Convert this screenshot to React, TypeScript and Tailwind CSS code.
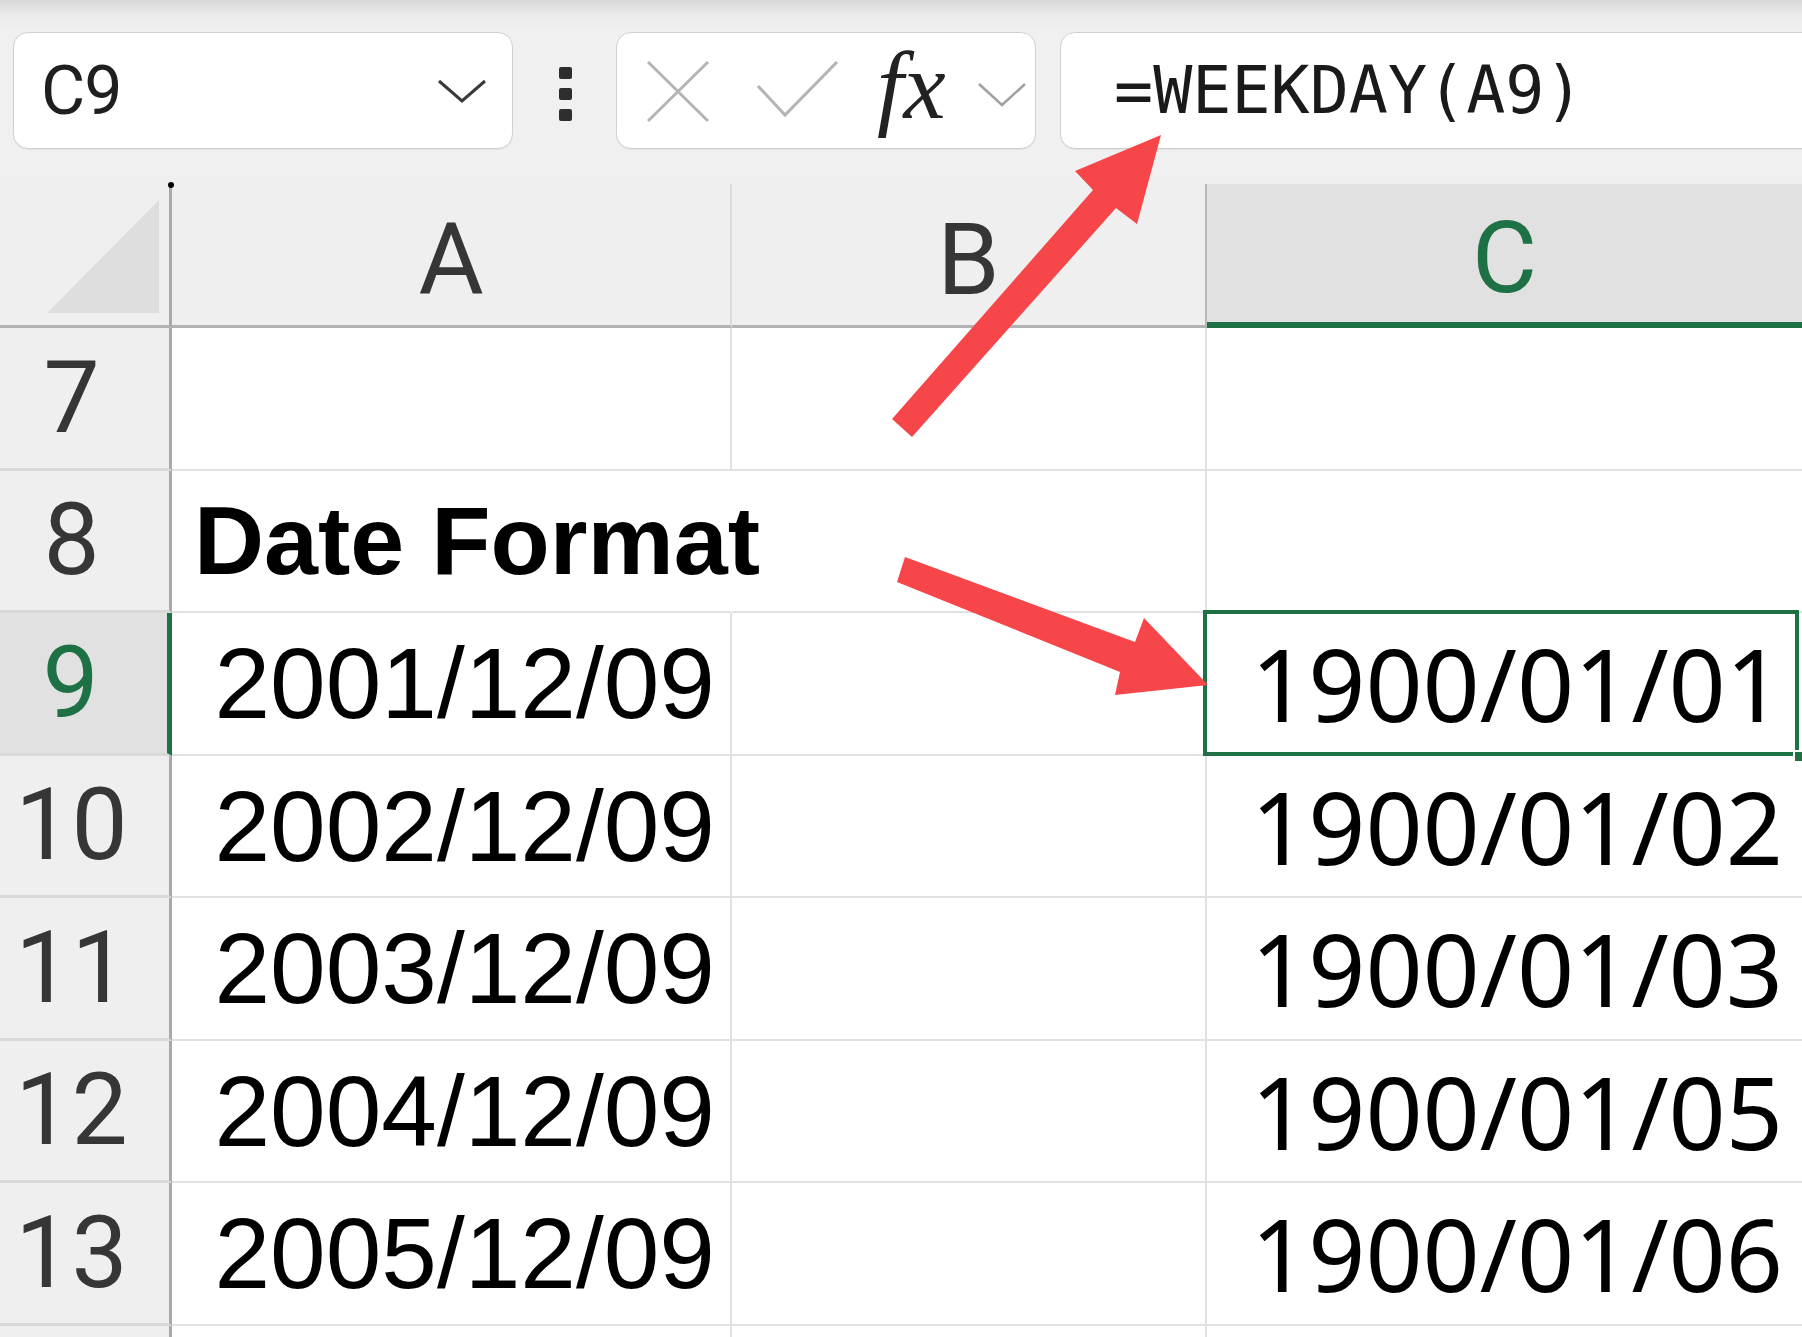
import React from 'react';

const ROWS = [
  { n: 7, a: '', c: '' },
  { n: 8, a: 'Date Format', c: '', heading: true },
  { n: 9, a: '2001/12/09', c: '1900/01/01', active: true },
  { n: 10, a: '2002/12/09', c: '1900/01/02' },
  { n: 11, a: '2003/12/09', c: '1900/01/03' },
  { n: 12, a: '2004/12/09', c: '1900/01/05' },
  { n: 13, a: '2005/12/09', c: '1900/01/06' },
  // row 14 only peeks in at the bottom edge, its number is out of view
  { n: 14, a: '', c: '', hidden: true },
];

function NameBox() {
  return (
    <div className="w-[500px] h-[117px] shrink-0 bg-white border border-[#d0d0d0] rounded-[15px] flex items-center justify-between pl-[27px] pr-[25px] shadow-[0_1px_1px_rgba(0,0,0,0.06)]">
      <span className="font-['Roboto',sans-serif] text-[68px] leading-none text-[#1f1f1f] tracking-[-1px]">C9</span>
      <svg width="50" height="26" viewBox="0 0 50 26" fill="none">
        <polyline points="2,3 25,23 48,3" stroke="#3a3a3a" strokeWidth="3" />
      </svg>
    </div>
  );
}

function FormulaButtons() {
  return (
    <div className="w-[420px] h-[117px] shrink-0 bg-white border border-[#d0d0d0] rounded-[15px] flex items-center pl-[30px] shadow-[0_1px_1px_rgba(0,0,0,0.06)]">
      {/* cancel */}
      <svg width="62" height="62" viewBox="0 0 62 62" fill="none" className="mt-[2px]">
        <line x1="1" y1="1" x2="61" y2="60" stroke="#b4b4b4" strokeWidth="3" />
        <line x1="61" y1="1" x2="1" y2="60" stroke="#b4b4b4" strokeWidth="3" />
      </svg>
      {/* enter */}
      <svg width="82" height="58" viewBox="0 0 82 58" fill="none" className="ml-[48px] -mt-[2px]">
        <polyline points="1,25 28,54 80,1" stroke="#b4b4b4" strokeWidth="3" />
      </svg>
      <span className="ml-[38px] font-['Liberation_Serif',serif] italic text-[95px] leading-none text-[#222222] -mt-[8px]">fx</span>
      <svg width="50" height="26" viewBox="0 0 50 26" fill="none" className="ml-auto mr-[8px] mt-[8px]">
        <polyline points="2,2 25,23 48,2" stroke="#a0a0a0" strokeWidth="2.5" />
      </svg>
    </div>
  );
}

function Toolbar() {
  return (
    <div className="h-[178px] shrink-0 flex items-start pt-[32px] pl-[13px] overflow-hidden bg-[linear-gradient(to_bottom,#d8d8d8_0px,#e9e9e9_14px,#f0f0f0_28px)]">
      <NameBox />
      <div className="ml-[46px] mt-[35px] flex flex-col gap-[9px] shrink-0">
        <div className="w-[13px] h-[12px] rounded-[2px] bg-[#2e2e2e]" />
        <div className="w-[13px] h-[12px] rounded-[2px] bg-[#2e2e2e]" />
        <div className="w-[13px] h-[12px] rounded-[2px] bg-[#2e2e2e]" />
      </div>
      <div className="ml-[44px]">
        <FormulaButtons />
      </div>
      <div className="ml-[24px] w-[800px] h-[117px] shrink-0 bg-white border border-[#d0d0d0] rounded-[15px] flex items-center pl-[53px] shadow-[0_1px_1px_rgba(0,0,0,0.06)]">
        <span className="font-['DejaVu_Sans_Mono',monospace] text-[65px] leading-none text-[#1a1a1a]">=WEEKDAY(A9)</span>
      </div>
    </div>
  );
}

function HeaderRow() {
  const letter = "font-['Roboto',sans-serif] text-[100px] leading-none pt-[10px]";
  return (
    <div className="h-[150px] shrink-0 flex pt-[6px] bg-[#efefef]">
      <div className="relative w-[172px] shrink-0 border-r-[3px] border-r-[#a9a9a9] border-b-[3px] border-b-[#b3b3b3]">
        <svg width="170" height="144" viewBox="0 0 170 144" className="absolute left-0 -top-[6px]">
          <polygon points="159,22 159,135 47,135" fill="#dedede" />
        </svg>
        <div className="absolute -right-[5px] -top-[2px] w-[6px] h-[6px] rounded-full bg-black" />
      </div>
      <div className={`w-[560px] shrink-0 flex items-center justify-center border-r-2 border-r-[#dadada] border-b-[3px] border-b-[#b3b3b3] text-[#363636] ${letter}`}>A</div>
      <div className={`w-[475px] shrink-0 flex items-center justify-center border-r-2 border-r-[#b8b8b8] border-b-[3px] border-b-[#b3b3b3] text-[#363636] ${letter}`}>B</div>
      <div className={`flex-1 flex items-center justify-center bg-[#e1e1e1] border-b-[6px] border-b-[#1e7145] text-[#1e7145] ${letter}`}>C</div>
    </div>
  );
}

function Row({ row }: { row: (typeof ROWS)[number] }) {
  const active = 'active' in row && row.active;
  const heading = 'heading' in row && row.heading;
  const hidden = 'hidden' in row && row.hidden;
  return (
    <div className="h-[142.5px] shrink-0 flex bg-white">
      <div
        className={`w-[172px] shrink-0 flex items-center justify-center pr-[26px] border-b-[3px] border-b-[#d8d8d8] font-['Roboto',sans-serif] text-[100px] leading-none ${
          active
            ? 'bg-[#e1e1e1] border-r-[5px] border-r-[#1e7145] text-[#1e7145]'
            : 'bg-[#efefef] border-r-[3px] border-r-[#a9a9a9] text-[#363636]'
        }`}
      >
        {hidden ? '' : row.n}
      </div>
      <div
        className={`w-[560px] shrink-0 flex items-center whitespace-nowrap border-b-2 border-b-[#e1e1e1] border-r-2 font-['Liberation_Sans',Arial,sans-serif] leading-none text-black ${
          heading
            ? 'justify-start pl-[22px] font-bold text-[97px] border-r-transparent'
            : 'justify-end pr-[15px] text-[100px] border-r-[#e1e1e1]'
        }`}
      >
        {row.a}
      </div>
      <div className="w-[475px] shrink-0 border-b-2 border-b-[#e1e1e1] border-r-2 border-r-[#e1e1e1]" />
      <div className="relative flex-1 flex items-center justify-end pr-[19px] border-b-2 border-b-[#e1e1e1] font-['Noto_Sans',sans-serif] text-[100px] leading-none text-black">
        {row.c}
        {active && (
          <>
            <div className="absolute -top-[3px] -left-[4px] -bottom-[2px] right-[3px] border-[4px] border-[#1e7145]" />
            <div className="absolute -bottom-[7px] right-0 w-[9px] h-[11px] bg-[#1e7145] border-l-2 border-t-2 border-white" />
          </>
        )}
      </div>
    </div>
  );
}

export default function App() {
  return (
    <div className="relative w-[1802px] h-[1337px] overflow-hidden bg-[#f0f0f0] flex flex-col">
      <Toolbar />
      <HeaderRow />
      {ROWS.map((row) => (
        <Row key={row.n} row={row} />
      ))}

      {/* callout arrows */}
      <svg
        className="absolute inset-0 pointer-events-none"
        width="1802"
        height="1337"
        viewBox="0 0 1802 1337"
      >
        <polygon
          points="892,419 1093,190 1075,171 1161,135 1137,224 1116,208 912,437"
          fill="#f6464a"
        />
        <polygon
          points="905,557 1135,642 1144,618 1208,685 1115,695 1120,672 897,582"
          fill="#f6464a"
        />
      </svg>
    </div>
  );
}
